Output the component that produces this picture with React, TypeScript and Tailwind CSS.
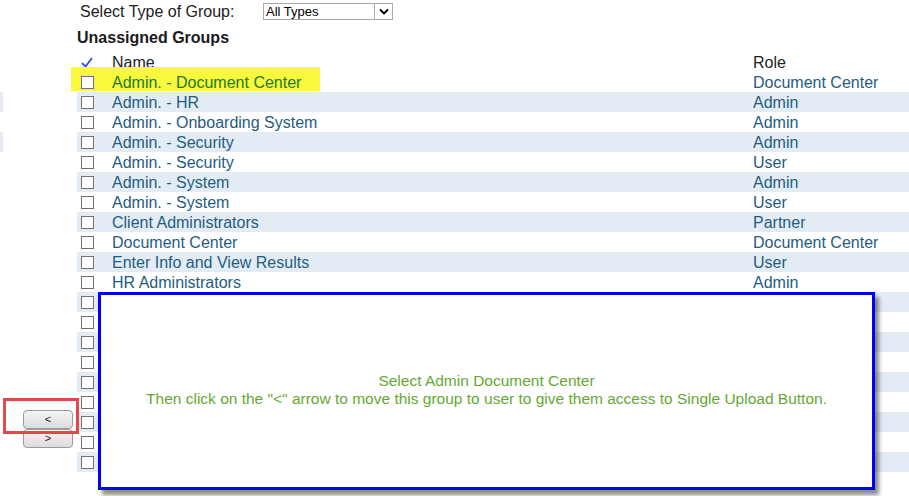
// Group assignment screen — unassigned groups list with an annotation callout
const groups: { name: string; role: string }[] = [
  { name: 'Admin. - Document Center', role: 'Document Center' },
  { name: 'Admin. - HR', role: 'Admin' },
  { name: 'Admin. - Onboarding System', role: 'Admin' },
  { name: 'Admin. - Security', role: 'Admin' },
  { name: 'Admin. - Security', role: 'User' },
  { name: 'Admin. - System', role: 'Admin' },
  { name: 'Admin. - System', role: 'User' },
  { name: 'Client Administrators', role: 'Partner' },
  { name: 'Document Center', role: 'Document Center' },
  { name: 'Enter Info and View Results', role: 'User' },
  { name: 'HR Administrators', role: 'Admin' },
  { name: '', role: '' },
  { name: '', role: '' },
  { name: '', role: '' },
  { name: '', role: '' },
  { name: '', role: '' },
  { name: '', role: '' },
  { name: '', role: '' },
  { name: '', role: '' },
  { name: '', role: '' },
]

function Checkbox() {
  return <span className="block w-[13px] h-[13px] border border-[#707070] bg-white shrink-0" />
}

function MoveButton({ label }: { label: string }) {
  return (
    <button className="w-[50px] h-[19px] rounded-[4px] border border-[#9a9a9a] bg-gradient-to-b from-[#f4f4f4] to-[#dcdcdc] text-[11px] leading-none text-[#222] flex items-center justify-center">
      {label}
    </button>
  )
}

export default function App() {
  return (
    <div className="relative w-[909px] h-[496px] overflow-hidden bg-white font-['Liberation_Sans',Arial,sans-serif]">
      {/* Filter */}
      <div className="h-[29px] flex items-start pt-[3px] pl-[80px]">
        <span className="w-[183px] text-[16px] leading-[17px] text-[#222]">Select Type of Group:</span>
        <div className="w-[130px] h-[17px] border border-[#a9a9a9] flex items-center bg-white">
          <span className="flex-1 pl-[2px] text-[13px] leading-none text-black">All Types</span>
          <span className="w-[18px] h-[15px] border-l border-[#a9a9a9] flex items-center justify-center">
            <svg width="10" height="7" viewBox="0 0 10 7">
              <path d="M1 1.5 L5 5.5 L9 1.5" fill="none" stroke="#000" strokeWidth="1.8" />
            </svg>
          </span>
        </div>
      </div>

      <div className="h-[23px] pl-[77px] text-[16px] leading-[18px] font-bold text-[#1a1a1a]">Unassigned Groups</div>

      {/* Header */}
      <div className="h-[20px] pl-[77px] flex items-center text-[16px] text-[#222]">
        <span className="w-[35px] pl-[4px]">
          <svg width="12" height="11" viewBox="0 0 12 11">
            <path d="M1 6 L4.5 9.5 L11 1" fill="none" stroke="#3c5fc4" strokeWidth="2" />
          </svg>
        </span>
        <span className="w-[641px] leading-[20px] pt-[2px]">Name</span>
        <span className="leading-[20px] pt-[2px]">Role</span>
      </div>

      {/* Body */}
      <div className="flex">
        <div className="w-[77px] flex flex-col">
          <div className="h-[20px]" />
          <div className="h-[20px] w-[3px] bg-[#e3ecf4]" />
          <div className="h-[20px]" />
          <div className="h-[20px] w-[3px] bg-[#e3ecf4]" />
          <div className="mt-[258px] pl-[23px] flex flex-col">
            <MoveButton label="<" />
            <MoveButton label=">" />
          </div>
        </div>

        <div className="flex-1">
          {groups.map((g, i) => (
            <div
              key={i}
              className={`relative h-[20px] flex items-center text-[16px] leading-[20px] ${i % 2 === 1 ? 'bg-[#e3ecf4]' : ''}`}
            >
              {i === 0 && <div className="absolute -left-[6px] -top-[5px] w-[249px] h-[24px] bg-[#f8f83c]" />}
              <span className="relative w-[35px] pl-[4px]">
                <Checkbox />
              </span>
              <span className={`relative w-[641px] pt-[2px] ${i === 0 ? 'text-[#1d7a2a]' : 'text-[#1f5c82]'}`}>{g.name}</span>
              <span className="relative pt-[2px] text-[#1f5c82]">{g.role}</span>
            </div>
          ))}
        </div>
      </div>

      {/* Annotation: red box round the move-left button */}
      <div className="absolute left-[3px] top-[398px] w-[76px] h-[36px] border-[3px] border-[#e34848]" />

      {/* Annotation callout */}
      <div className="absolute left-[98px] top-[292px] w-[777px] h-[198px] border-[3px] border-[#0000ff] bg-white shadow-[4px_5px_4px_rgba(0,0,0,0.45)] flex flex-col items-center justify-center pb-[2px] text-[15.5px] leading-[18px] text-[#66a832]">
        <span>Select Admin Document Center</span>
        <span>Then click on the "&lt;" arrow to move this group to user to give them access to Single Upload Button.</span>
      </div>
    </div>
  )
}
